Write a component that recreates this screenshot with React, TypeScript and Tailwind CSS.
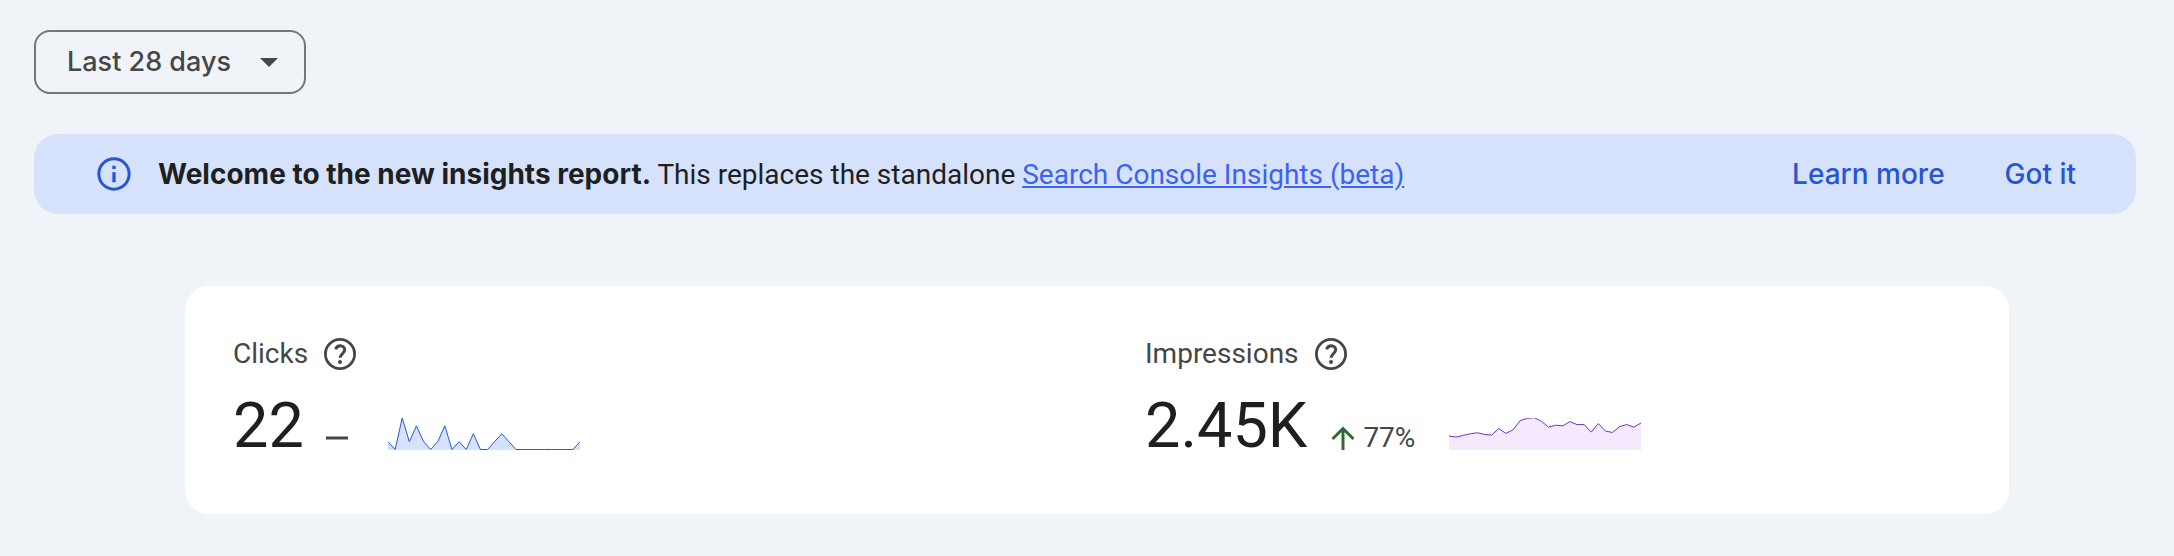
import React, { useState } from "react";

const CLICKS = [1, 0, 4, 1, 3, 1, 0, 1, 3, 0, 1, 0, 2, 0, 0, 1, 2, 1, 0, 0, 0, 0, 0, 0, 0, 0, 0, 1];

const IMPRESSIONS = [
  41, 38, 43, 48, 51, 46, 44, 64, 49, 60, 88, 95, 97, 86,
  68, 74, 72, 85, 76, 76, 53, 79, 56, 52, 70, 76, 68, 81,
];

type SparklineProps = {
  data: number[];
  max: number;
  label: string;
  stroke: string;
  fill: string;
};

const Sparkline: React.FC<SparklineProps> = ({ data, max, label, stroke, fill }) => {
  const points = data
    .map((value, i) => `${(i * 192) / (data.length - 1)},${31.5 - (value / max) * 31.5}`)
    .join(" ");

  return (
    <svg role="img" aria-label={label} viewBox="0 0 192 32" className="h-8 w-48 shrink-0">
      <polygon points={`0,32 ${points} 192,32`} className={fill} />
      <polyline points={points} fill="none" strokeWidth="1" className={stroke} />
    </svg>
  );
};

const InfoIcon = () => (
  <svg viewBox="0 0 24 24" fill="currentColor" aria-hidden="true" className="h-10 w-10 shrink-0 text-[#2656d1]">
    <path d="M11 7h2v2h-2zM11 11h2v6h-2zM12 2C6.48 2 2 6.48 2 12s4.48 10 10 10 10-4.48 10-10S17.52 2 12 2zm0 18.2c-4.52 0-8.2-3.68-8.2-8.2S7.48 3.8 12 3.8s8.2 3.68 8.2 8.2-3.68 8.2-8.2 8.2z" />
  </svg>
);

const HelpIcon = () => (
  <svg viewBox="0 0 32 32" fill="none" stroke="currentColor" aria-hidden="true" className="h-8 w-8">
    <circle cx="16" cy="16" r="14.6" strokeWidth="2.8" />
    <path d="M11.6 11.4C12.2 9.1 13.8 7.7 16.2 7.7c2.6 0 4.5 1.7 4.5 4.1 0 3.5-4.6 4.1-4.6 8" strokeWidth="3" />
    <circle cx="16" cy="24" r="2" fill="currentColor" stroke="none" />
  </svg>
);

const ArrowUpIcon = () => (
  <svg viewBox="0 0 24 24" fill="none" stroke="currentColor" strokeWidth="3" aria-hidden="true" className="h-6 w-6">
    <path d="M12 24V3M1.5 13 12 2.5 22.5 13" />
  </svg>
);

type MetricProps = {
  title: string;
  value: string;
  children: React.ReactNode;
};

const Metric: React.FC<MetricProps> = ({ title, value, children }) => (
  <div className="px-12 pt-12 pb-[52px]">
    <div className="flex h-10 items-center gap-4 text-[#444746]">
      <h2 className="text-[28px] leading-10">{title}</h2>
      <button type="button" aria-label={`About ${title.toLowerCase()}`}>
        <HelpIcon />
      </button>
    </div>
    <div className="mt-4 flex h-[72px] items-end">
      <p className="text-[63px] leading-[72px] text-[#1f1f1f]">{value}</p>
      {children}
    </div>
  </div>
);

const App: React.FC = () => {
  const [range, setRange] = useState("28");
  const [showBanner, setShowBanner] = useState(true);

  return (
    <main className="min-h-screen bg-[#f0f4f9] pt-[30px] pr-[38px] pb-[42px] pl-[34px] font-['Roboto',sans-serif] text-[#1f1f1f]">
      <div className="relative inline-flex text-[#444746]">
        <select
          aria-label="Date range"
          value={range}
          onChange={(e) => setRange(e.target.value)}
          className="h-16 appearance-none rounded-2xl border-2 border-[#747775] bg-transparent pr-[72px] pl-[31px] font-['Inter',sans-serif] text-[27px] leading-10 font-medium"
        >
          <option value="28">Last 28 days</option>
          <option value="7">Last 7 days</option>
        </select>
        <svg
          viewBox="0 0 18 9"
          fill="currentColor"
          aria-hidden="true"
          className="pointer-events-none absolute top-7 right-7 h-[9px] w-[18px]"
        >
          <path d="M0 0h18L9 9z" />
        </svg>
      </div>

      {showBanner && (
        <section className="mt-10 flex min-h-20 items-center rounded-3xl bg-[#d6e2fb] px-[60px] text-[28px] leading-10">
          <InfoIcon />
          <p className="ml-6 flex-1">
            <strong className="font-['Inter',sans-serif] font-bold">Welcome to the new insights report.</strong>{" "}
            This replaces the standalone{" "}
            <a href="#insights" className="text-[#3b63f3] underline">
              Search Console Insights (beta)
            </a>
          </p>
          <div className="flex gap-[60px] font-['Inter',sans-serif] font-medium text-[#2656d1]">
            <a href="#learn-more">Learn more</a>
            <button type="button" onClick={() => setShowBanner(false)}>
              Got it
            </button>
          </div>
        </section>
      )}

      <div className="mt-[72px] pl-6">
        <section className="mx-auto grid max-w-[1824px] grid-cols-2 rounded-3xl bg-white">
          <Metric title="Clicks" value="22">
            <svg viewBox="0 0 22 24" role="img" aria-label="No change" className="mb-3 ml-[22px] h-6 w-[22px] text-[#444746]">
              <path d="M0 12h22" stroke="currentColor" strokeWidth="3" />
            </svg>
            <div className="mb-3 ml-10">
              <Sparkline data={CLICKS} max={4} label="Clicks per day" fill="fill-[#d6e2fb]" stroke="stroke-[#2656d1]" />
            </div>
          </Metric>
          <Metric title="Impressions" value="2.45K">
            <span className="mb-3 ml-6 text-[#2e6b34]">
              <ArrowUpIcon />
            </span>
            <span className="mb-1 ml-2 text-[28px] leading-10 text-[#444746]">77%</span>
            <div className="mb-3 ml-[34px]">
              <Sparkline data={IMPRESSIONS} max={96} label="Impressions per day" fill="fill-[#f4e9fd]" stroke="stroke-[#6a35c9]" />
            </div>
          </Metric>
        </section>
      </div>
    </main>
  );
};

export default App;
